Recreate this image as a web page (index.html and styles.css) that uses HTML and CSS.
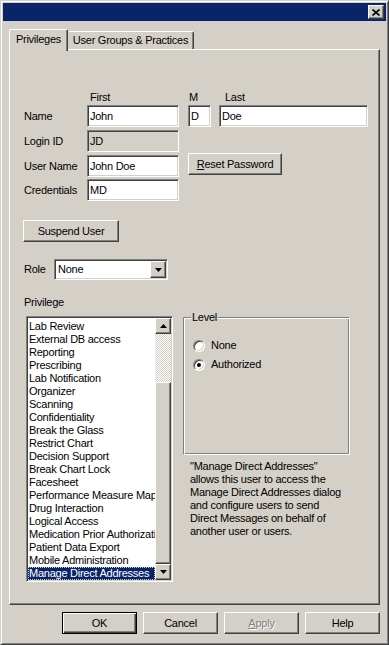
FILE: index.html
```html
<!DOCTYPE html>
<html>
<head>
  <title>User Privileges</title>
  <link rel="stylesheet" href="styles.css">
</head>
<body>

  <div class="window">
    <div class="titlebar">
      <span class="close raised">
        <svg width="8" height="7" viewBox="0 0 8 7"><path d="M0.5 0.5L7.5 6.5M7.5 0.5L0.5 6.5" stroke="#000" stroke-width="1.7" fill="none"/></svg>
      </span>
    </div>

    <div class="tabs">
      <div class="tab tab-active">Privileges</div>
      <div class="tab tab-other">User Groups &amp; Practices</div>
    </div>

    <div class="panel">
      <div class="hdr-row">
        <span class="hdr-first">First</span>
        <span class="hdr-m">M</span>
        <span class="hdr-last">Last</span>
      </div>

      <div class="row row-name">
        <span class="lbl">Name</span>
        <input class="txt sunken" type="text" value="John">
        <input class="txt txt-m sunken" type="text" value="D">
        <input class="txt txt-last sunken" type="text" value="Doe">
      </div>

      <div class="row">
        <span class="lbl">Login ID</span>
        <input class="txt txt-off sunken" type="text" value="JD" readonly>
      </div>

      <div class="row">
        <span class="lbl">User Name</span>
        <input class="txt sunken" type="text" value="John Doe">
        <button class="btn raised btn-reset"><u>R</u>eset Password</button>
      </div>

      <div class="row row-cred">
        <span class="lbl">Credentials</span>
        <input class="txt sunken" type="text" value="MD">
      </div>

      <button class="btn raised btn-suspend">Suspend User</button>

      <div class="row row-role">
        <span class="lbl lbl-role">Role</span>
        <div class="select sunken">
          <span class="select-value">None</span>
          <span class="arrow-btn raised">
            <svg width="7" height="4" viewBox="0 0 7 4"><path d="M0 0H7L3.5 4z"/></svg>
          </span>
        </div>
      </div>

      <div class="privilege-lbl">Privilege</div>

      <div class="main">
        <div class="listbox sunken">
          <div class="items">
            <div class="item">Lab Review</div>
            <div class="item">External DB access</div>
            <div class="item">Reporting</div>
            <div class="item">Prescribing</div>
            <div class="item">Lab Notification</div>
            <div class="item">Organizer</div>
            <div class="item">Scanning</div>
            <div class="item">Confidentiality</div>
            <div class="item">Break the Glass</div>
            <div class="item">Restrict Chart</div>
            <div class="item">Decision Support</div>
            <div class="item">Break Chart Lock</div>
            <div class="item">Facesheet</div>
            <div class="item">Performance Measure Map</div>
            <div class="item">Drug Interaction</div>
            <div class="item">Logical Access</div>
            <div class="item">Medication Prior Authorization</div>
            <div class="item">Patient Data Export</div>
            <div class="item">Mobile Administration</div>
            <div class="item item-selected">Manage Direct Addresses</div>
          </div>
          <div class="scrollbar">
            <span class="arrow-btn scroll-btn raised">
              <svg width="7" height="4" viewBox="0 0 7 4"><path d="M3.5 0L7 4H0z"/></svg>
            </span>
            <span class="track"></span>
            <span class="thumb raised"></span>
            <span class="arrow-btn scroll-btn raised">
              <svg width="7" height="4" viewBox="0 0 7 4"><path d="M0 0H7L3.5 4z"/></svg>
            </span>
          </div>
        </div>

        <div class="side">
          <fieldset class="level">
            <legend>Level</legend>
            <div class="radio-row radio-first"><span class="radio"></span>None</div>
            <div class="radio-row"><span class="radio radio-on"></span>Authorized</div>
          </fieldset>
          <div class="desc">
            "Manage Direct Addresses"<br>
            allows this user to access the<br>
            Manage Direct Addresses dialog<br>
            and configure users to send<br>
            Direct Messages on behalf of<br>
            another user or users.
          </div>
        </div>
      </div>
    </div>

    <div class="actions">
      <button class="btn btn-ok">OK</button>
      <button class="btn raised">Cancel</button>
      <button class="btn raised btn-off"><u>A</u>pply</button>
      <button class="btn raised">Help</button>
    </div>
  </div>

</body>
</html>
```

FILE: styles.css
```css
* {
  box-sizing: border-box;
}
body {
  margin: 0;
  background: #d4d0c8;
  font-family: "Liberation Sans", Arial, sans-serif;
  font-size: 11px;
  line-height: 13px;
  letter-spacing: -0.25px;
  color: #000;
}
.window {
  width: 389px;
  height: 645px;
  padding: 2px;
  border: 1px solid;
  border-color: #d4d0c8 #404040 #404040 #d4d0c8;
  box-shadow: inset 1px 1px #fff, inset -1px -1px #808080;
}
.raised {
  background: #d4d0c8;
  border: 1px solid;
  border-color: #fff #404040 #404040 #fff;
  box-shadow: inset -1px -1px #808080;
}
.sunken {
  border: 1px solid;
  border-color: #808080 #fff #fff #808080;
  box-shadow: inset 1px 1px #404040, inset -1px -1px #d4d0c8;
}
.titlebar {
  height: 18px;
  background: #0a246a;
  display: flex;
  align-items: center;
  justify-content: flex-end;
  padding-right: 2px;
}
.close {
  width: 16px;
  height: 14px;
  display: flex;
  align-items: center;
  justify-content: center;
}

/* tabs */
.tabs {
  display: flex;
  align-items: flex-end;
  height: 20px;
  margin: 8px 0 0 6px;
}
.tab {
  height: 18px;
  display: flex;
  align-items: center;
  justify-content: center;
  border-top: 1px solid #fff;
  border-right: 1px solid #404040;
  box-shadow: inset -1px 0 #808080;
  border-radius: 2px 2px 0 0;
}
.tab-active {
  width: 59px;
  height: 22px;
  margin-bottom: -2px;
  padding-bottom: 2px;
  border-left: 1px solid #fff;
  background: #d4d0c8;
  position: relative;
  z-index: 1;
}
.tab-other {
  width: 126px;
}

/* panel */
.panel {
  width: 371px;
  height: 556px;
  margin-left: 6px;
  padding: 41px 0 0 14px;
  border: 1px solid;
  border-color: #fff #404040 #404040 #fff;
  box-shadow: inset -1px -1px #808080;
}
.hdr-row {
  display: flex;
  height: 13px;
  padding-left: 63px;
}
.hdr-first {
  width: 92px;
  padding-left: 3px;
}
.hdr-m {
  width: 23px;
  margin-left: 9px;
  padding-left: 1px;
}
.hdr-last {
  margin-left: 8px;
  padding-left: 6px;
}
.row {
  display: flex;
  align-items: center;
  height: 22px;
  margin-top: 3px;
}
.row-name {
  margin-top: 1px;
}
.row-cred {
  margin-top: 2px;
}
.lbl {
  width: 63px;
}
.txt {
  width: 92px;
  height: 22px;
  margin: 0;
  padding: 0 2px;
  background: #fff;
  font: inherit;
  letter-spacing: inherit;
  color: #000;
  outline: none;
}
.txt-m {
  width: 23px;
  margin-left: 9px;
}
.txt-last {
  width: 149px;
  margin-left: 8px;
}
.txt-off {
  background: #d4d0c8;
}
.btn {
  height: 22px;
  padding: 0;
  font: inherit;
  letter-spacing: inherit;
  color: #000;
}
.btn-reset {
  width: 94px;
  margin-left: 9px;
  align-self: flex-start;
  margin-top: -2px;
}
.btn-suspend {
  display: block;
  width: 96px;
  margin: 19px 0 0 -1px;
}
.row-role {
  height: 21px;
  margin-top: 17px;
}
.lbl-role {
  width: 30px;
}
.select {
  width: 114px;
  height: 21px;
  padding: 1px;
  display: flex;
  background: #fff;
}
.select-value {
  flex: 1;
  padding-left: 2px;
  display: flex;
  align-items: center;
}
.arrow-btn {
  width: 16px;
  display: flex;
  align-items: center;
  justify-content: center;
}
.privilege-lbl {
  height: 13px;
  margin-top: 16px;
}

/* list + level */
.main {
  display: flex;
  align-items: flex-start;
  margin-top: 7px;
}
.listbox {
  width: 147px;
  height: 266px;
  margin-left: 2px;
  padding: 1px;
  display: flex;
  background: #fff;
}
.items {
  flex: 1;
  min-width: 0;
  padding-top: 2px;
  overflow: hidden;
}
.item {
  height: 13px;
  padding-left: 1px;
  white-space: nowrap;
  overflow: hidden;
}
.item-selected {
  background: #0a246a;
  color: #fff;
  outline: 1px dotted #d4d0c8;
  outline-offset: -1px;
}
.scrollbar {
  width: 16px;
  display: flex;
  flex-direction: column;
}
.scroll-btn {
  height: 16px;
}
.track {
  height: 48px;
  background-image: conic-gradient(#d4d0c8 25%, #fff 0 50%, #d4d0c8 0 75%, #fff 0);
  background-size: 2px 2px;
}
.thumb {
  height: 182px;
}
.side {
  width: 167px;
  margin: -5px 0 0 10px;
}
.level {
  height: 144px;
  margin: 0;
  padding: 0 0 0 9px;
  min-width: 0;
  border: 1px solid;
  border-color: #808080 #fff #fff #808080;
  box-shadow: inset 1px 1px #fff, inset -1px -1px #808080;
}
.level legend {
  margin-left: -2px;
  padding: 0 1px;
  background: #d4d0c8;
}
.radio-row {
  display: flex;
  align-items: center;
  height: 13px;
  margin-top: 6px;
}
.radio-first {
  margin-top: 15px;
}
.radio {
  width: 12px;
  height: 12px;
  margin-right: 6px;
  border-radius: 50%;
  border: 1px solid;
  border-color: #808080 #fff #fff #808080;
  box-shadow: inset 1px 1px #404040, inset -1px -1px #d4d0c8;
  background: #fff;
  display: flex;
  align-items: center;
  justify-content: center;
}
.radio-on::after {
  content: "";
  width: 4px;
  height: 4px;
  border-radius: 50%;
  background: #000;
}
.desc {
  margin-top: 5px;
  padding-left: 7px;
  white-space: nowrap;
}

/* dialog buttons */
.actions {
  display: flex;
  justify-content: flex-end;
  gap: 6px;
  margin-top: 7px;
  padding-right: 6px;
}
.actions .btn {
  width: 75px;
}
.btn-ok {
  background: #d4d0c8;
  border: 1px solid #000;
  box-shadow: inset 1px 1px #fff, inset -1px -1px #404040, inset -2px -2px #808080;
}
.btn-off {
  color: #808080;
  text-shadow: 1px 1px #fff;
}
```
